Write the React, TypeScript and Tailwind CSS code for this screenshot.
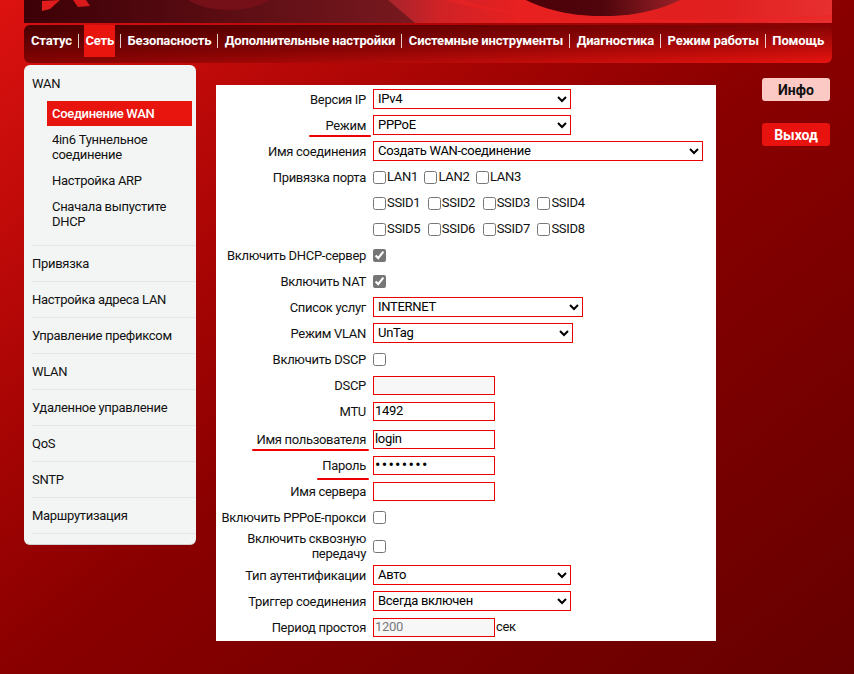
import React from 'react';

const topMenu = ['Статус', 'Сеть', 'Безопасность', 'Дополнительные настройки', 'Системные инструменты', 'Диагностика', 'Режим работы', 'Помощь'];
const sideMenu = ['Привязка', 'Настройка адреса LAN', 'Управление префиксом', 'WLAN', 'Удаленное управление', 'QoS', 'SNTP', 'Маршрутизация'];

const Banner = () => (
  <svg width="808" height="23" viewBox="0 0 808 23" className="block">
    <defs>
      <linearGradient id="base" x1="0" y1="0" x2="1" y2="0">
        <stop offset="0" stopColor="#3c0006" />
        <stop offset="0.5" stopColor="#7a1a20" />
      </linearGradient>
      <linearGradient id="swoosh" x1="0" y1="0" x2="1" y2="0">
        <stop offset="0" stopColor="#a8242c" />
        <stop offset="0.12" stopColor="#d02226" />
        <stop offset="0.3" stopColor="#e82020" />
        <stop offset="0.75" stopColor="#e01f1f" />
        <stop offset="1" stopColor="#e83030" />
      </linearGradient>
      <linearGradient id="hole" x1="0" y1="0" x2="1" y2="0">
        <stop offset="0" stopColor="#4a0006" />
        <stop offset="0.5" stopColor="#50050c" />
        <stop offset="1" stopColor="#b02a30" />
      </linearGradient>
    </defs>
    <rect width="808" height="23" fill="url(#base)" />
    <ellipse cx="205" cy="-14" rx="50" ry="24" fill="#751018" />
    <path d="M18 1 L36 0 L26 9 L18 11 Z" fill="#e01c1c" />
    <path d="M49 0 L62 0 L66 6 L54 7 Z" fill="#d81a1a" />
    <path d="M364 0 L808 0 L808 23 L391 23 Z" fill="url(#swoosh)" />
    <path d="M420 0 Q520 30 808 15 L808 19 Q520 30 440 0 Z" fill="#f02424" opacity="0.5" />
    <ellipse cx="579" cy="-28" rx="100" ry="44" fill="url(#hole)" />
  </svg>
);

const Select = ({ value, width }: { value: string; width: string }) => (
  <select defaultValue={value} className={`h-5 border border-[#ee0000] pb-[2px] text-[13px] text-black ${width}`}>
    <option>{value}</option>
  </select>
);

const TextInput = ({ value, type = 'text', disabled }: { value?: string; type?: string; disabled?: boolean }) => (
  <input
    type={type}
    defaultValue={value}
    disabled={disabled}
    className={`h-[19px] w-[122px] border border-[#ee0000] px-px text-black disabled:bg-[#f7f7f7] disabled:text-[#777] ${type === 'password' ? 'text-[16px] tracking-[1.3px]' : 'text-[13px]'}`}
  />
);

const Check = ({ checked }: { checked?: boolean }) => (
  <input type="checkbox" defaultChecked={checked} className="m-0 h-[13px] w-[13px] accent-[#767676]" />
);

const Row = ({ label, mark, children, tall }: { label?: React.ReactNode; mark?: string; children?: React.ReactNode; tall?: boolean }) => (
  <div className={`relative flex items-center ${tall ? 'h-8' : 'h-[26px]'}`}>
    <div className="w-[150px] shrink-0 pl-[5px] text-right leading-[15px]">{label}</div>
    <div className="ml-[7px] flex items-center">{children}</div>
    {mark && <div className={`absolute h-0.5 rounded-full bg-[#ee0000] ${mark}`} />}
  </div>
);

const CheckLabel = ({ text }: { text: string }) => (
  <label className="flex items-center gap-px">
    <Check />
    <span>{text}</span>
  </label>
);

export default function App() {
  return (
    <div className="h-screen min-h-[674px] overflow-hidden bg-linear-to-br from-[#dc1210] via-[#8a0000] via-50% to-[#660000] pl-6 font-['Roboto',sans-serif] text-[13px] tracking-[-0.3px] text-[#111]">
      <div className="w-[808px]">
        <Banner />
        <div className="mt-0.5 flex h-[38px] items-start rounded-md bg-linear-to-br from-[#480000] via-[#860404] to-[#e81410] pl-1.5 font-bold tracking-[-0.16px] text-white">
          {topMenu.map((item, i) => (
            <React.Fragment key={item}>
              {i > 0 && <span className="ml-[5px] mr-[5.5px] mt-[9px] h-[14px] w-px shrink-0 bg-white/80" />}
              <a className={`flex h-8 items-center px-px whitespace-nowrap ${item === 'Сеть' ? 'bg-[#e8140e]' : ''}`}>{item}</a>
            </React.Fragment>
          ))}
        </div>
      </div>

      <div className="mt-0.5 flex items-start">
        <aside className="h-[480px] w-[172px] shrink-0 rounded-md border-b border-[#cfd2d0] bg-[#f3f5f4] pl-2">
          <div className="border-b border-[#e4e8ea] pb-[11px]">
            <div className="flex h-9 items-center pt-0.5">WAN</div>
            <div className="ml-[15px] mr-1 flex flex-col gap-px leading-[15px]">
              <div className="bg-[#e8140e] p-[5px] font-medium text-white">Соединение WAN</div>
              <div className="p-[5px]">4in6 Туннельное соединение</div>
              <div className="p-[5px]">Настройка ARP</div>
              <div className="p-[5px]">Сначала выпустите DHCP</div>
            </div>
          </div>
          {sideMenu.map(item => (
            <div key={item} className="flex h-9 items-center border-b border-[#e4e8ea]">{item}</div>
          ))}
        </aside>

        <main className="ml-5 mt-5 h-[556px] w-[500px] shrink-0 bg-white pt-px">
          <Row label="Версия IP"><Select value="IPv4" width="w-[198px]" /></Row>
          <Row label="Режим" mark="left-[93px] top-[23px] w-[62px]"><Select value="PPPoE" width="w-[198px]" /></Row>
          <Row label="Имя соединения"><Select value="Создать WAN-соединение" width="w-[330px]" /></Row>
          <Row label="Привязка порта">
            <div className="flex gap-[6.5px]">
              {['LAN1', 'LAN2', 'LAN3'].map(t => <CheckLabel key={t} text={t} />)}
            </div>
          </Row>
          <Row>
            <div className="flex gap-[7.5px]">
              {['SSID1', 'SSID2', 'SSID3', 'SSID4'].map(t => <CheckLabel key={t} text={t} />)}
            </div>
          </Row>
          <Row>
            <div className="flex gap-[7.5px]">
              {['SSID5', 'SSID6', 'SSID7', 'SSID8'].map(t => <CheckLabel key={t} text={t} />)}
            </div>
          </Row>
          <Row label="Включить DHCP-сервер"><Check checked /></Row>
          <Row label="Включить NAT"><Check checked /></Row>
          <Row label="Список услуг"><Select value="INTERNET" width="w-[210px]" /></Row>
          <Row label="Режим VLAN"><Select value="UnTag" width="w-[200px]" /></Row>
          <Row label="Включить DSCP"><Check /></Row>
          <Row label="DSCP"><TextInput disabled /></Row>
          <Row label="MTU"><TextInput value="1492" /></Row>
          <div className="h-0.5" />
          <Row label="Имя пользователя" mark="left-9 top-[23px] w-[117px]"><TextInput value="login" /></Row>
          <Row label="Пароль" mark="left-[101px] top-[26px] w-[52px]"><TextInput value="password" type="password" /></Row>
          <Row label="Имя сервера"><TextInput /></Row>
          <Row label="Включить PPPoE-прокси"><Check /></Row>
          <Row label="Включить сквозную передачу" tall><Check /></Row>
          <Row label="Тип аутентификации"><Select value="Авто" width="w-[198px]" /></Row>
          <Row label="Триггер соединения"><Select value="Всегда включен" width="w-[198px]" /></Row>
          <Row label="Период простоя">
            <TextInput value="1200" disabled />
            <span className="ml-px">сек</span>
          </Row>
        </main>

        <div className="ml-[46px] mt-[13px] flex w-[68px] flex-col gap-[22px] text-sm font-bold tracking-normal">
          <button className="h-[23px] rounded-[3px] bg-[#fdc9c5] text-[#111]">Инфо</button>
          <button className="h-[23px] rounded-[3px] bg-[#e8120e] text-white">Выход</button>
        </div>
      </div>
    </div>
  );
}
